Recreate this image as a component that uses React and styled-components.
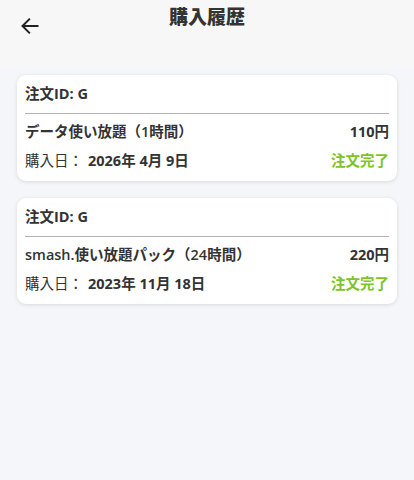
import React from 'react'
import styled, { createGlobalStyle } from 'styled-components'

const GlobalStyle = createGlobalStyle`
  body {
    margin: 0;
    background: #f5f6fa;
    font-family: "Open Sans", "Noto Sans CJK JP", sans-serif;
    color: #333;
  }
`

const Page = styled.div`
  width: 414px;
  min-height: 480px;
  background: #f5f6fa;
`

const Header = styled.header`
  height: 66px;
  background: #f7f7f7;
  position: relative;
  display: flex;
  justify-content: center;
`

const BackButton = styled.button`
  position: absolute;
  left: 18px;
  top: 14px;
  width: 24px;
  height: 24px;
  padding: 0;
  border: none;
  background: none;
  display: flex;
  align-items: center;
  justify-content: center;
`

const Title = styled.h1`
  margin: 0;
  padding-top: 3px;
  font-family: "Noto Sans CJK JP", sans-serif;
  font-size: 19px;
  font-weight: 900;
  line-height: 26px;
  color: #333;
`

const List = styled.div`
  display: flex;
  flex-direction: column;
  gap: 17px;
  padding: 9px 17px;
`

const Card = styled.div`
  background: #fff;
  border-radius: 9px;
  box-shadow: 0 1px 4px rgba(0, 0, 0, 0.12);
  padding: 8px 8px 10px;
`

const OrderId = styled.div`
  font-size: 14.5px;
  font-weight: 700;
  line-height: 20px;
  padding: 1px 0 9px;
  border-bottom: 1.5px solid #b3b3b3;
`

const Row = styled.div`
  display: flex;
  justify-content: space-between;
  align-items: center;
  font-size: 14.5px;
  line-height: 20px;
  margin-top: ${p => p.$top}px;
`

const Name = styled.span`
  font-weight: 600;
  color: #333;
`

const Price = styled.span`
  font-weight: 700;
`

const Label = styled.span`
  font-weight: 400;
`

const DateText = styled.span`
  font-weight: 700;
  margin-left: 5px;
`

const Status = styled.span`
  color: #7cc427;
  font-weight: 700;
`

const orders = [
  { id: 'G', name: 'データ使い放題（1時間）', price: '110円', date: '2026年 4月 9日' },
  { id: 'G', name: 'smash.使い放題パック（24時間）', price: '220円', date: '2023年 11月 18日' },
]

export default function App() {
  return (
    <Page>
      <GlobalStyle />
      <Header>
        <BackButton aria-label="戻る">
          <svg width="20" height="20" viewBox="0 0 24 24" fill="none" stroke="#222" strokeWidth="2.4" strokeLinecap="square">
            <path d="M21 12H4" />
            <path d="M11 4l-8 8 8 8" />
          </svg>
        </BackButton>
        <Title>購入履歴</Title>
      </Header>
      <List>
        {orders.map((o, i) => (
          <Card key={i}>
            <OrderId>注文ID: {o.id}</OrderId>
            <Row $top={8}>
              <Name>{o.name}</Name>
              <Price>{o.price}</Price>
            </Row>
            <Row $top={9}>
              <span>
                <Label>購入日：</Label>
                <DateText>{o.date}</DateText>
              </span>
              <Status>注文完了</Status>
            </Row>
          </Card>
        ))}
      </List>
    </Page>
  )
}
